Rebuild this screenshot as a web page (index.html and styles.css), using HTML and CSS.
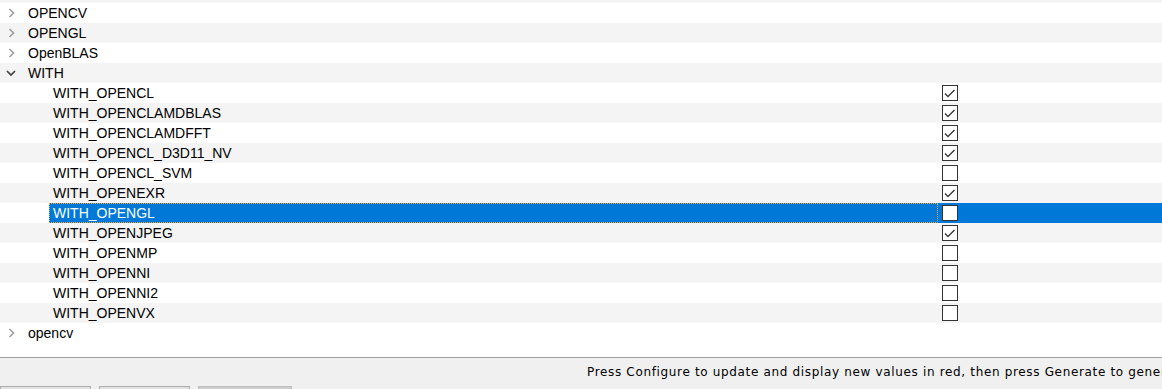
FILE: index.html
```html
<!DOCTYPE html>
<html>
<head>
<meta charset="utf-8">
<link rel="stylesheet" href="styles.css">
</head>
<body>
<div class="app">
  <div class="tree">
    <div class="rows">
      <div class="row alt"></div>
      <div class="row group"><span class="exp"><svg width="24" height="20" viewBox="0 0 24 20"><polyline points="9.5,6 13.5,10 9.5,14" class="chev"/></svg></span><span class="name">OPENCV</span></div>
      <div class="row group alt"><span class="exp"><svg width="24" height="20" viewBox="0 0 24 20"><polyline points="9.5,6 13.5,10 9.5,14" class="chev"/></svg></span><span class="name">OPENGL</span></div>
      <div class="row group"><span class="exp"><svg width="24" height="20" viewBox="0 0 24 20"><polyline points="9.5,6 13.5,10 9.5,14" class="chev"/></svg></span><span class="name">OpenBLAS</span></div>
      <div class="row group alt"><span class="exp"><svg width="24" height="20" viewBox="0 0 24 20"><polyline points="7,8 11,12 15,8" class="chev open"/></svg></span><span class="name">WITH</span></div>

      <div class="row child"><span class="indent"></span><span class="name">WITH_OPENCL</span><span class="val"><span class="cb"><svg width="14" height="14" viewBox="0 0 14 14"><polyline points="2,7.5 5,10.5 11.5,4" class="tick"/></svg></span></span></div>
      <div class="row child alt"><span class="indent"></span><span class="name">WITH_OPENCLAMDBLAS</span><span class="val"><span class="cb"><svg width="14" height="14" viewBox="0 0 14 14"><polyline points="2,7.5 5,10.5 11.5,4" class="tick"/></svg></span></span></div>
      <div class="row child"><span class="indent"></span><span class="name">WITH_OPENCLAMDFFT</span><span class="val"><span class="cb"><svg width="14" height="14" viewBox="0 0 14 14"><polyline points="2,7.5 5,10.5 11.5,4" class="tick"/></svg></span></span></div>
      <div class="row child alt"><span class="indent"></span><span class="name">WITH_OPENCL_D3D11_NV</span><span class="val"><span class="cb"><svg width="14" height="14" viewBox="0 0 14 14"><polyline points="2,7.5 5,10.5 11.5,4" class="tick"/></svg></span></span></div>
      <div class="row child"><span class="indent"></span><span class="name">WITH_OPENCL_SVM</span><span class="val"><span class="cb"></span></span></div>
      <div class="row child alt"><span class="indent"></span><span class="name">WITH_OPENEXR</span><span class="val"><span class="cb"><svg width="14" height="14" viewBox="0 0 14 14"><polyline points="2,7.5 5,10.5 11.5,4" class="tick"/></svg></span></span></div>
      <div class="row child selected"><span class="indent"></span><span class="name">WITH_OPENGL</span><span class="val"><span class="cb"></span></span></div>
      <div class="row child alt"><span class="indent"></span><span class="name">WITH_OPENJPEG</span><span class="val"><span class="cb"><svg width="14" height="14" viewBox="0 0 14 14"><polyline points="2,7.5 5,10.5 11.5,4" class="tick"/></svg></span></span></div>
      <div class="row child"><span class="indent"></span><span class="name">WITH_OPENMP</span><span class="val"><span class="cb"></span></span></div>
      <div class="row child alt"><span class="indent"></span><span class="name">WITH_OPENNI</span><span class="val"><span class="cb"></span></span></div>
      <div class="row child"><span class="indent"></span><span class="name">WITH_OPENNI2</span><span class="val"><span class="cb"></span></span></div>
      <div class="row child alt"><span class="indent"></span><span class="name">WITH_OPENVX</span><span class="val"><span class="cb"></span></span></div>
      <div class="row group"><span class="exp"><svg width="24" height="20" viewBox="0 0 24 20"><polyline points="9.5,6 13.5,10 9.5,14" class="chev"/></svg></span><span class="name">opencv</span></div>
    </div>
  </div>
  <div class="status"><span class="msg">Press Configure to update and display new values in red, then press Generate to generate selected build files.</span></div>
  <div class="buttons">
    <button class="btn">Configure</button>
    <button class="btn">Generate</button>
    <button class="btn disabled">Open Project</button>
  </div>
</div>
</body>
</html>
```
FILE: styles.css
```css
html, body {
  margin: 0;
  padding: 0;
}
body {
  width: 1162px;
  height: 389px;
  overflow: hidden;
  background: #f0f0f0;
  font-family: "Liberation Sans", Arial, sans-serif;
}
.app {
  display: flex;
  flex-direction: column;
  height: 389px;
  overflow: hidden;
}
.tree {
  height: 357px;
  flex: none;
  overflow: hidden;
  background: #ffffff;
  border-bottom: 1px solid #a0a0a0;
}
.rows {
  margin-top: -17px;
  display: flex;
  flex-direction: column;
}
.row {
  height: 20px;
  display: flex;
  align-items: stretch;
  background: #ffffff;
  font-size: 14px;
  color: #000;
}
.row.alt {
  background: #f4f4f4;
}
.exp {
  width: 24px;
  flex: none;
  display: flex;
}
.chev {
  fill: none;
  stroke: #a0a0a0;
  stroke-width: 1.7;
}
.chev.open {
  stroke: #404040;
}
.name {
  flex: 1;
  display: flex;
  align-items: center;
  padding-left: 4px;
  white-space: nowrap;
}
.indent {
  width: 49px;
  flex: none;
}
.child .name {
  flex: none;
  width: 889px;
  box-sizing: border-box;
}
.val {
  flex: 1;
  display: flex;
  align-items: center;
  padding-left: 4px;
}
.cb {
  width: 16px;
  height: 16px;
  box-sizing: border-box;
  border: 1px solid #333333;
  background: #ffffff;
  display: flex;
  align-items: center;
  justify-content: center;
}
.tick {
  fill: none;
  stroke: #3a3a3a;
  stroke-width: 1.4;
}
.selected .indent {
  background: #ffffff;
}
.selected .name {
  background: #0078d7;
  color: #ffffff;
  border: 1px dotted #f2a33a;
  padding-left: 3px;
}
.selected .val {
  background: #0078d7;
}
.status {
  height: 28px;
  flex: none;
  display: flex;
  align-items: center;
  padding-left: 587px;
  white-space: nowrap;
  overflow: hidden;
  font-family: "DejaVu Sans", sans-serif;
  font-size: 12px;
  letter-spacing: 0.66px;
  color: #000;
}
.buttons {
  display: flex;
  gap: 8px;
  flex: none;
}
.btn {
  height: 23px;
  width: 91px;
  box-sizing: border-box;
  border: 1px solid #adadad;
  background: #e1e1e1;
  font-family: "Liberation Sans", Arial, sans-serif;
  font-size: 12px;
  padding: 0;
  margin: 0;
}
.btn.disabled {
  width: 94px;
  background: #cccccc;
  border-color: #bfbfbf;
  color: #838383;
}
```
